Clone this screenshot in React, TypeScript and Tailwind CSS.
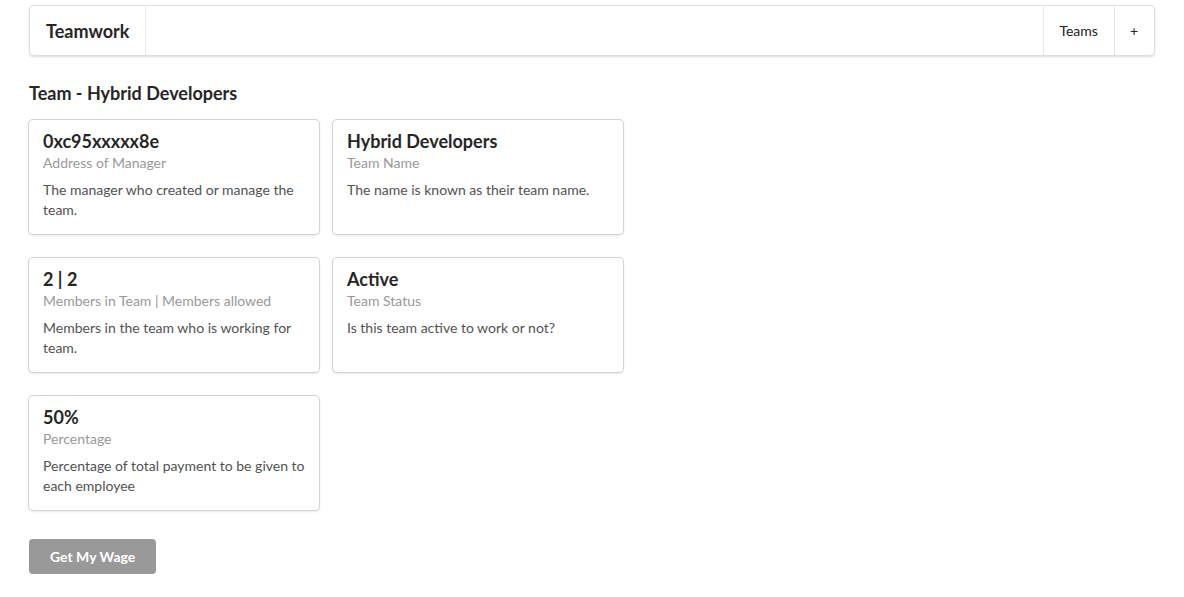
const cards = [
  {
    header: "0xc95xxxxx8e",
    meta: "Address of Manager",
    description: "The manager who created or manage the team.",
  },
  {
    header: "Hybrid Developers",
    meta: "Team Name",
    description: "The name is known as their team name.",
  },
  {
    header: "2 | 2",
    meta: "Members in Team | Members allowed",
    description: "Members in the team who is working for team.",
  },
  {
    header: "Active",
    meta: "Team Status",
    description: "Is this team active to work or not?",
  },
  {
    header: "50%",
    meta: "Percentage",
    description: "Percentage of total payment to be given to each employee",
  },
];

function InfoCard({ header, meta, description }: { header: string; meta: string; description: string }) {
  return (
    <div className="rounded-[4px] bg-white p-[14px] shadow-[0_1px_3px_0_#d4d4d5,0_0_0_1px_#d4d4d5]">
      <div className="-mt-[4px] text-[18px] font-bold leading-[23px] text-[#262626]">{header}</div>
      <div className="text-[14px] leading-[20px] text-[#999]">{meta}</div>
      <p className="mt-[7px] text-[14px] leading-[20px] text-[#525252]">{description}</p>
    </div>
  );
}

export default function App() {
  return (
    <div
      className="min-h-screen bg-white px-[29px] pt-[5px] text-[14px] text-[#212121]"
      style={{ fontFamily: "Lato, 'Helvetica Neue', Arial, Helvetica, sans-serif" }}
    >
      <nav className="flex h-[51px] rounded-[4px] border border-[#dedede] bg-white shadow-[0_1px_2px_0_rgba(34,36,38,0.15)]">
        <div className="flex items-center border-r border-[#e8e8e8] px-4 pt-px text-[18px] font-bold text-[#262626]">
          Teamwork
        </div>
        <div className="ml-auto flex">
          <div className="flex items-center border-l border-[#e8e8e8] pl-[15px] pr-4 text-[14px]">Teams</div>
          <div className="flex items-center border-l border-[#e8e8e8] pl-[15px] pr-4 text-[14px]">+</div>
        </div>
      </nav>

      <h3 className="mt-[26px] text-[18px] font-bold leading-[23px] text-[#262626]">
        Team - Hybrid Developers
      </h3>

      <div className="mt-[15px] grid grid-cols-[290px_290px] gap-x-[14px] gap-y-[24px]">
        {cards.map((c) => (
          <InfoCard key={c.meta} {...c} />
        ))}
      </div>

      <button className="mt-[29px] h-[35px] rounded-[4px] bg-[#999] px-[21px] text-[14px] font-bold text-white">
        Get My Wage
      </button>
    </div>
  );
}
